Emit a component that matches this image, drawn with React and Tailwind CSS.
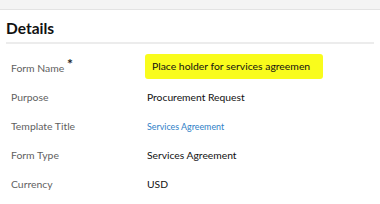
const rows = [
  { label: 'Purpose', value: 'Procurement Request' },
  { label: 'Template Title', value: 'Services Agreement', link: true },
  { label: 'Form Type', value: 'Services Agreement' },
  { label: 'Currency', value: 'USD' },
];

const App = () => {
  return (
    <div className="h-[204px] w-[380px] overflow-hidden bg-white" style={{ fontFamily: 'Lato, "Open Sans", sans-serif' }}>
      <div className="h-[10px] border-b border-[#e3e3e3] bg-[#f4f4f4]" />
      <div className="px-[6px]">
        <h2 className="border-b-2 border-[#ececec] pb-[3px] pt-[7px] text-[15.5px] font-bold leading-[22px] text-[#111]">
          Details
        </h2>
        <div className="mt-[10px] flex items-center">
          <div className="w-[139px] whitespace-nowrap pl-[5px] text-[10.4px] text-[#5f5f5f]">
            Form Name <span className="relative -top-[3px] text-[14px] font-bold text-[#222]">*</span>
          </div>
          <div className="flex h-[25px] w-[178px] items-center whitespace-nowrap rounded-[3px] bg-[#f9fc1c] pl-[7px] text-[10.4px] text-[#111]">
            Place holder for services agreemen
          </div>
        </div>
        <div className="mt-[4px] flex flex-col">
          {rows.map((row) => (
            <div key={row.label} className="flex h-[29px] items-center">
              <div className="w-[141px] whitespace-nowrap pl-[5px] text-[10.4px] text-[#5f5f5f]">{row.label}</div>
              <div className={row.link ? 'text-[8.9px] text-[#2f7fc7]' : 'text-[10.3px] text-[#111]'}>{row.value}</div>
            </div>
          ))}
        </div>
      </div>
    </div>
  );
};

export default App;
